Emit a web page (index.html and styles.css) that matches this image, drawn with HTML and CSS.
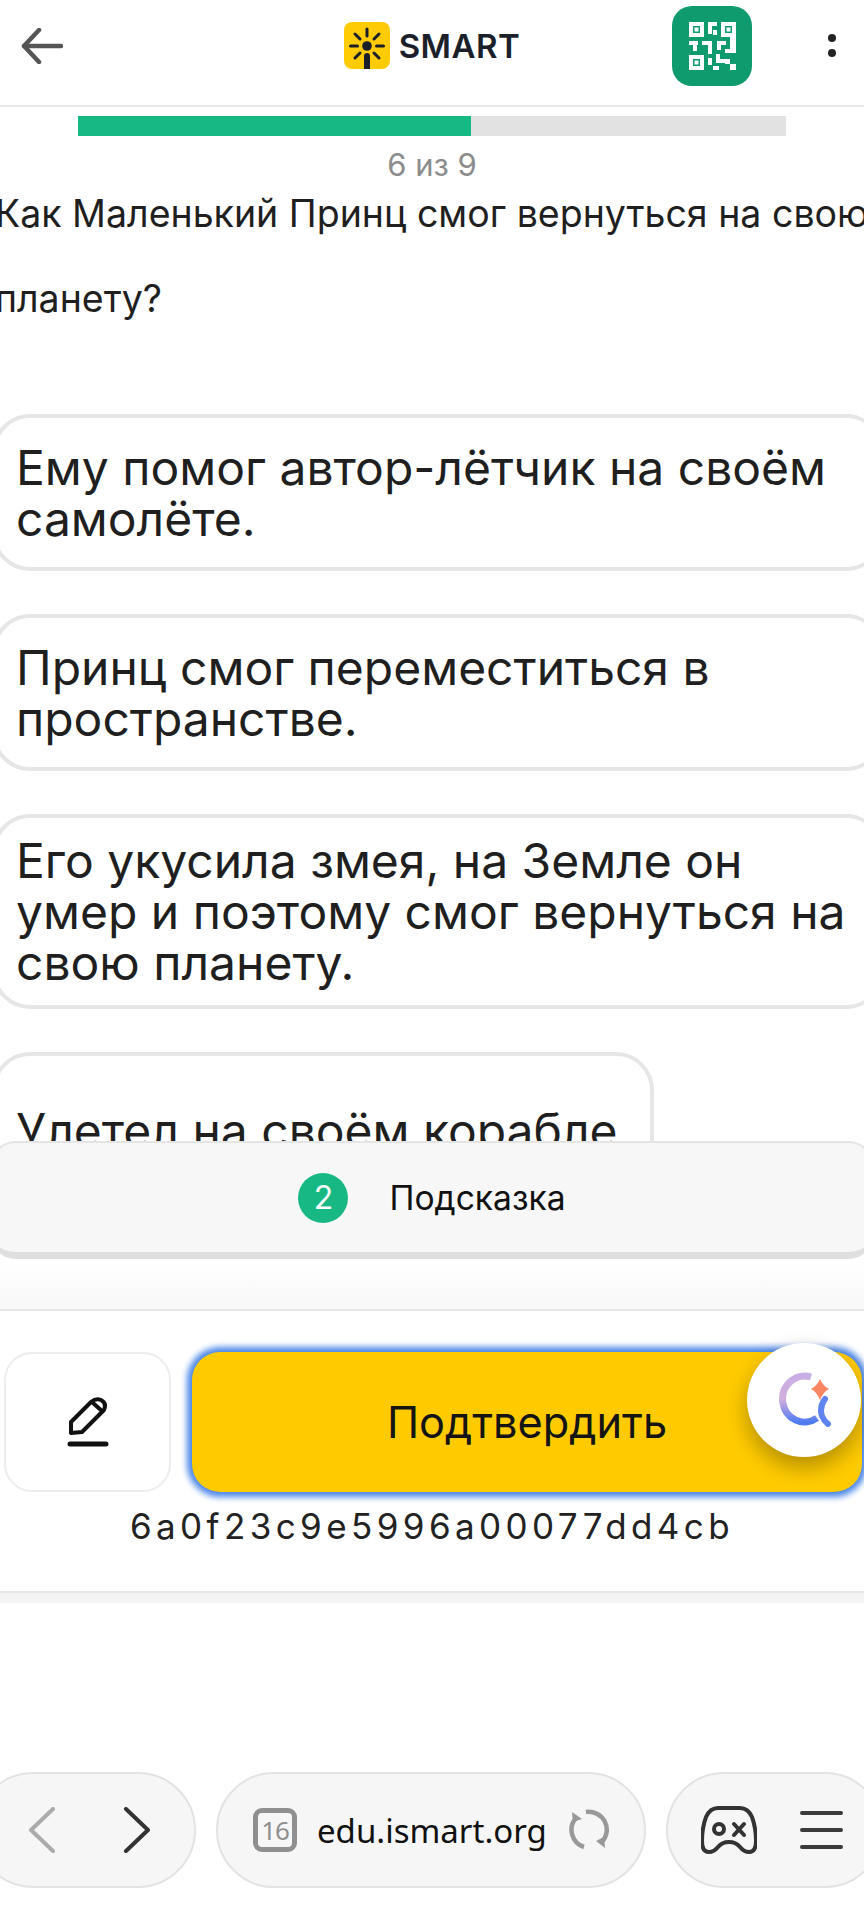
FILE: index.html
```html
<!DOCTYPE html>
<html lang="ru">
<head>
  <meta charset="UTF-8" />
  <title>iSmart</title>
  <link rel="stylesheet" href="styles.css">
</head>
<body>

  <header class="topbar">
    <div class="topbar-left">
      <svg class="back-icon" viewBox="0 0 42 36" width="42" height="36" fill="none" stroke="#555" stroke-width="4.5" stroke-linecap="round" stroke-linejoin="round">
        <path d="M40 18H3"/><path d="M18 2 3 18l15 16"/>
      </svg>
    </div>
    <div class="logo">
      <svg viewBox="0 0 46 47" width="46" height="47">
        <rect width="46" height="47" rx="8" fill="#ffcb05"/>
        <g stroke="#1b1f2a" stroke-width="3" stroke-linecap="round">
          <path d="M23 7v7M6.500 24h7M32.500 24h7M11 12l5 5M35 12l-5 5M11 36l5-5M35 36l-5-5"/>
        </g>
        <circle cx="23" cy="24" r="4.800" fill="#1b1f2a"/>
        <path d="M20 47V34q0-3 3-3t3 3v13z" fill="#1b1f2a"/>
      </svg>
      <span class="logo-text">SMART</span>
    </div>
    <div class="topbar-right">
      <div class="qr-btn">
        <svg viewBox="0 0 47 48" width="47" height="48" fill="#fff">
          <path fill-rule="evenodd" d="M0 0h15v15H0zM4 4v7h7V4z"/>
          <rect x="5.500" y="5.500" width="4" height="4"/>
          <path fill-rule="evenodd" d="M32 0h15v15H32zM36 4v7h7V4z"/>
          <rect x="37.500" y="5.500" width="4" height="4"/>
          <path fill-rule="evenodd" d="M0 33h15v15H0zM4 37v7h7v-7z"/>
          <rect x="5.500" y="38.500" width="4" height="4"/>
          <rect x="19" y="0" width="9" height="4"/>
          <rect x="19" y="4" width="4" height="8"/>
          <rect x="24" y="8" width="4" height="5"/>
          <rect x="0" y="19" width="9" height="4"/>
          <rect x="4" y="23" width="4" height="6"/>
          <rect x="13" y="19" width="10" height="4"/>
          <rect x="19" y="23" width="4" height="9"/>
          <rect x="28" y="19" width="9" height="4"/>
          <rect x="28" y="23" width="4" height="5"/>
          <rect x="41" y="15" width="6" height="16"/>
          <rect x="36" y="27" width="5" height="4"/>
          <rect x="27" y="32" width="4" height="9"/>
          <rect x="31" y="37" width="5" height="4"/>
          <rect x="36" y="37" width="5" height="5"/>
          <rect x="41" y="42" width="6" height="6"/>
          <rect x="19" y="36" width="4" height="7"/>
          <rect x="24" y="44" width="6" height="4"/>
        </svg>
      </div>
      <div class="dots"><i></i><i></i></div>
    </div>
  </header>

  <div class="progress"><div class="progress-fill" style="width: 55.55%"></div></div>
  <div class="counter">6 из 9</div>

  <p class="question">Как Маленький Принц смог вернуться на свою<br>планету?</p>

  <div class="answers">
    <div class="answer">Ему помог автор-лётчик на своём самолёте.</div>
    <div class="answer">Принц смог переместиться в пространстве.</div>
    <div class="answer">Его укусила змея, на Земле он умер и поэтому смог вернуться на свою планету.</div>
    <div class="answer">Улетел на своём корабле</div>
  </div>

  <div class="hint">
    <span class="hint-count">2</span>
    <span>Подсказка</span>
  </div>
  <div class="fade"></div>

  <div class="actions">
    <div class="action-row">
      <div class="edit-btn">
        <svg viewBox="0 0 42 50" width="42" height="50" fill="none" stroke="#111" stroke-width="4" stroke-linecap="round" stroke-linejoin="round">
          <path d="M4 36 4 25 24 5q5-4 10-2 6 3 3 10L15 35z"/>
          <path d="M26 6l9 8"/>
          <path d="M3 47h36" stroke-width="5"/>
        </svg>
      </div>
      <button class="confirm" type="button">Подтвердить</button>
    </div>
    <div class="hash">6a0f23c9e5996a00077dd4cb</div>
    <div class="assistant">
      <svg viewBox="0 0 54 56" width="54" height="56" fill="none">
        <defs>
          <linearGradient id="arcGrad" x1="0.700" y1="0" x2="0.700" y2="1">
            <stop offset="0" stop-color="#c9aee6"/>
            <stop offset="0.500" stop-color="#d3aedb"/>
            <stop offset="1" stop-color="#4f7bf0"/>
          </linearGradient>
        </defs>
        <path d="M34 5A22 23 0 1 0 40 46" stroke="url(#arcGrad)" stroke-width="7" stroke-linecap="butt"/>
        <path d="M43 7q3 7 9 10-6 3-9 11-3-8-9-11 6-3 9-10z" fill="#f98562"/>
        <path d="M48 27q-6 8-3 17 2 5 6 8" stroke="#5f84f0" stroke-width="6" stroke-linecap="round"/>
      </svg>
    </div>
  </div>
  <div class="band"></div>

  <nav class="browser-bar">
    <div class="pill pill-nav">
      <svg viewBox="0 0 28 46" width="28" height="46" fill="none" stroke="#ababab" stroke-width="4" stroke-linecap="round" stroke-linejoin="round"><path d="M25 2 3 23l22 21"/></svg>
      <svg viewBox="0 0 28 46" width="28" height="46" fill="none" stroke="#333" stroke-width="4" stroke-linecap="round" stroke-linejoin="round"><path d="M3 2l22 21L3 44"/></svg>
    </div>
    <div class="pill pill-url">
      <span class="tab-count">16</span>
      <span class="url">edu.ismart.org</span>
      <svg viewBox="0 0 42 42" width="42" height="42" fill="none" stroke="#999" stroke-width="4.500">
        <path d="M8 9A18 18 0 0 0 16 38"/><path d="M4 3l1 10 9-3z" stroke-width="0" fill="#999"/>
        <path d="M18 3A18 18 0 0 1 34 33"/><path d="M37 39l-1-11-8 4z" stroke-width="0" fill="#999"/>
      </svg>
    </div>
    <div class="pill pill-tools">
      <svg viewBox="0 0 56 48" width="56" height="48" fill="none" stroke="#333" stroke-width="4" stroke-linecap="round" stroke-linejoin="round">
        <path d="M17 2h22q8 0 12 9 4 11 4 24 0 11-7 11-5 0-9-5-4-5-11-5t-11 5q-4 5-9 5-7 0-7-11 0-13 4-24 4-9 12-9z"/>
        <circle cx="18" cy="23" r="5"/>
        <path d="M33 18l10 11M43 18 33 29"/>
      </svg>
      <div class="menu-icon"><i></i><i></i><i></i></div>
    </div>
  </nav>

</body>
</html>
```

FILE: styles.css
```css
* {
  box-sizing: border-box;
}
html, body {
  margin: 0;
  padding: 0;
  height: 1920px;
  overflow: hidden;
}
body {
  width: 864px;
  background-color: #fff;
  color: #1f1f1f;
  font-family: Inter, "Liberation Sans", sans-serif;
  position: relative;
}

/* Верхняя панель */
.topbar {
  height: 107px;
  padding-bottom: 14px;
  display: grid;
  grid-template-columns: 1fr auto 1fr;
  align-items: center;
  border-bottom: 2px solid #e8e8e8;
}
.topbar-left {
  padding-left: 21px;
  display: flex;
  align-items: center;
}
.logo {
  display: flex;
  align-items: center;
  gap: 9px;
}
.logo-text {
  font-family: Inter, sans-serif;
  font-weight: 600;
  font-size: 33px;
  letter-spacing: 0.500px;
  color: #1b1f2a;
}
.topbar-right {
  display: flex;
  justify-content: flex-end;
  align-items: center;
  padding-right: 28px;
  gap: 76px;
}
.qr-btn {
  width: 80px;
  height: 80px;
  border-radius: 20px;
  background-color: #0f9b6e;
  display: flex;
  align-items: center;
  justify-content: center;
}
.dots {
  display: flex;
  flex-direction: column;
  gap: 7px;
}
.dots i {
  display: block;
  width: 8px;
  height: 8px;
  border-radius: 50%;
  background-color: #222;
}

/* Прогресс */
.progress {
  height: 20px;
  margin: 9px 78px 0;
  background-color: #e2e2e2;
}
.progress-fill {
  height: 100%;
  background-color: #16b884;
}
.counter {
  margin-top: 14px;
  height: 30px;
  line-height: 30px;
  text-align: center;
  font-size: 31px;
  color: #8c8c8c;
}
.question {
  margin: -9px -40px 0 -5px;
  font-size: 37.500px;
  line-height: 85px;
  height: 171px;
  white-space: nowrap;
}

/* Ответы */
.answers {
  height: 727px;
  margin: 72px 0 0 -8px;
  width: 900px;
  overflow: hidden;
  display: flex;
  flex-direction: column;
  align-items: flex-start;
  gap: 43px;
}
.answer {
  flex-shrink: 0;
  min-height: 157px;
  max-width: 892px;
  display: flex;
  align-items: center;
  padding: 17px 32px 17px 20px;
  border: 4px solid #e6e6e6;
  border-radius: 38px;
  font-size: 48px;
  line-height: 51px;
}

/* Подсказка */
.hint {
  height: 118px;
  margin: 0 -10px;
  background-color: #f7f7f7;
  border: 2px solid #e4e4e4;
  border-bottom: 7px solid #dfdfdf;
  border-radius: 26px;
  display: flex;
  align-items: center;
  justify-content: center;
  gap: 41px;
  font-size: 33.600px;
  color: #111;
}
.hint-count {
  width: 50px;
  height: 50px;
  border-radius: 50%;
  background-color: #18b884;
  color: #fff;
  display: flex;
  align-items: center;
  justify-content: center;
  font-size: 32px;
}
.fade {
  height: 52px;
  background: linear-gradient(#fff, #f8f8f8);
  border-bottom: 2px solid #e6e6e6;
}

/* Кнопки */
.actions {
  height: 280px;
  position: relative;
  padding-top: 41px;
}
.action-row {
  display: flex;
  align-items: center;
  gap: 21px;
  padding: 0 2px 0 4px;
}
.edit-btn {
  width: 167px;
  height: 140px;
  border: 2px solid #ededed;
  border-radius: 28px;
  display: flex;
  align-items: center;
  justify-content: center;
}
.confirm {
  flex: 1;
  height: 140px;
  border: none;
  border-radius: 28px;
  background-color: #ffcb00;
  box-shadow: 0 0 6px 5px #4a86e8;
  color: #141414;
  font-family: inherit;
  font-size: 43.300px;
  padding: 0;
}
.hash {
  margin-top: 14px;
  text-align: center;
  font-size: 35px;
  line-height: 40px;
  letter-spacing: 4.400px;
  color: #222;
}
.assistant {
  position: absolute;
  left: 747px;
  top: 32px;
  width: 114px;
  height: 114px;
  border-radius: 50%;
  background-color: #fff;
  box-shadow: 0 10px 22px rgba(0, 0, 0, 0.3);
  display: flex;
  align-items: center;
  justify-content: center;
}
.band {
  height: 12px;
  background-color: #f3f3f3;
  border-top: 2px solid #e8e8e8;
}

/* Панель браузера */
.browser-bar {
  display: flex;
  gap: 20px;
  margin: 169px 0 0 -25px;
  width: 920px;
}
.pill {
  height: 116px;
  border-radius: 58px;
  background-color: #f6f6f6;
  border: 2px solid #e3e3e3;
  display: flex;
  align-items: center;
  flex-shrink: 0;
}
.pill-nav {
  width: 221px;
  padding-left: 51px;
  gap: 67px;
}
.pill-url {
  width: 430px;
  padding-left: 35px;
}
.tab-count {
  width: 44px;
  height: 44px;
  border: 5px solid #8f8f8f;
  border-radius: 9px;
  color: #8f8f8f;
  font-family: "Noto Sans", sans-serif;
  font-size: 26px;
  letter-spacing: -1px;
  display: flex;
  align-items: center;
  justify-content: center;
}
.url {
  margin-left: 20px;
  margin-right: 21px;
  font-family: "Noto Sans", sans-serif;
  font-size: 33px;
  color: #111;
}
.pill-tools {
  width: 217px;
  padding-left: 33px;
  gap: 43px;
}
.menu-icon {
  width: 43px;
  display: flex;
  flex-direction: column;
  gap: 13px;
}
.menu-icon i {
  display: block;
  height: 4px;
  border-radius: 2px;
  background-color: #3a3a3a;
}
```
